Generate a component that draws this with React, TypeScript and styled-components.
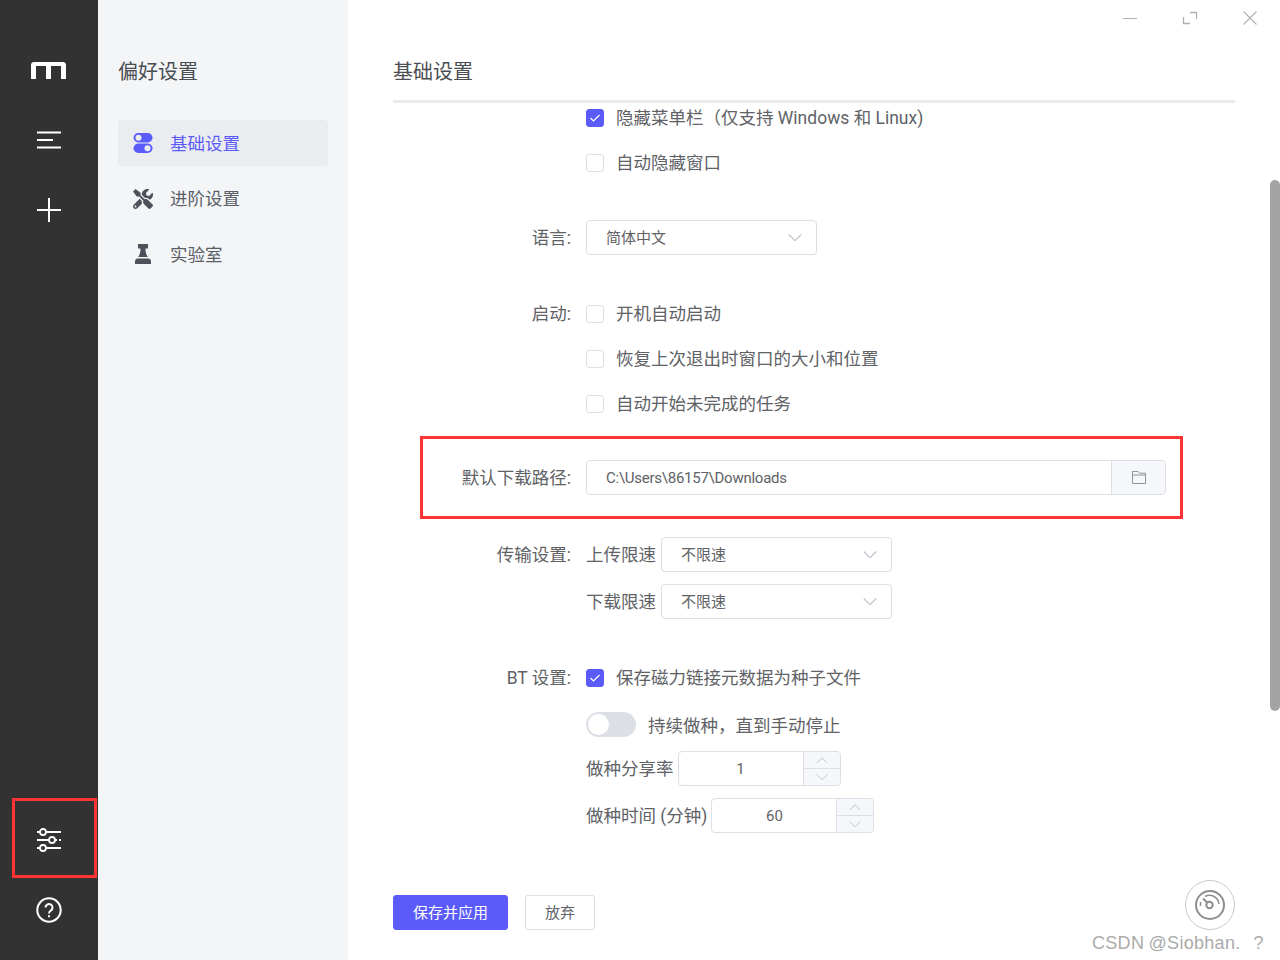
import React from "react";
import styled, { createGlobalStyle } from "styled-components";
import { FaTools } from "react-icons/fa";

const Global = createGlobalStyle`
  html, body { margin: 0; padding: 0; background: #fff; }
  body { font-family: Roboto, "Noto Sans CJK SC", sans-serif; color: #606266; }
  * { box-sizing: border-box; }
`;

const Shell = styled.div`
  position: relative;
  display: flex;
  width: 1280px;
  height: 960px;
  overflow: hidden;
`;

const Rail = styled.aside`
  width: 98px;
  flex: none;
  background: #323232;
  display: flex;
  flex-direction: column;
  justify-content: space-between;
  padding: 35px 0 15px;
`;
const RailGroup = styled.div`
  display: flex;
  flex-direction: column;
`;
const RailItem = styled.div`
  height: 70px;
  display: flex;
  align-items: center;
  justify-content: center;
  color: #fff;
`;
const LogoMark = styled.svg`
  margin-right: 1px;
`;

const SubPanel = styled.nav`
  width: 250px;
  flex: none;
  background: #f4f5f7;
  padding: 50px 20px 0;
`;
const SubTitle = styled.h2`
  margin: 0 0 28px;
  height: 42px;
  line-height: 44px;
  font-size: 20px;
  font-weight: 400;
  color: #4a4d52;
`;
const NavList = styled.div`
  display: flex;
  flex-direction: column;
  gap: 9.5px;
`;
const NavItem = styled.div<{ $active?: boolean }>`
  height: 46px;
  display: flex;
  align-items: center;
  gap: 17px;
  padding-left: 15px;
  border-radius: 4px;
  font-size: 17.5px;
  background: ${(p) => (p.$active ? "#ebecf0" : "transparent")};
  color: ${(p) => (p.$active ? "#5b5bfa" : "#5a5e66")};
`;
const NavIcon = styled.span`
  width: 20px;
  height: 20px;
  display: flex;
  align-items: center;
  justify-content: center;
  color: #4d5159;
`;
const Caption = styled.span`
  padding-bottom: 2px;
`;

const Main = styled.main`
  flex: 1;
  min-width: 0;
  display: flex;
  flex-direction: column;
  padding: 0 45px;
`;
const MainHeader = styled.header`
  height: 103px;
  flex: none;
  padding-top: 50px;
  border-bottom: 3px solid #ebebeb;
`;
const MainTitle = styled.h1`
  margin: 0;
  height: 42px;
  line-height: 44px;
  font-size: 20px;
  font-weight: 400;
  color: #4a4d52;
`;
const ScrollArea = styled.div`
  height: 777px;
  flex: none;
  overflow: hidden;
`;
const ScrollContent = styled.div`
  margin-top: -8px;
`;
const Row = styled.div<{ $top?: number }>`
  display: flex;
  margin-top: ${(p) => p.$top ?? 0}px;
`;
const Label = styled.div<{ $h?: number }>`
  width: 178px;
  flex: none;
  margin-right: 15px;
  padding-top: 1px;
  text-align: right;
  font-size: 17.5px;
  height: ${(p) => p.$h ?? 45}px;
  line-height: ${(p) => p.$h ?? 45}px;
`;
const Field = styled.div`
  flex: 1;
  min-width: 0;
`;
const CheckLine = styled.div`
  height: 45px;
  display: flex;
  align-items: center;
  gap: 12px;
  font-size: 17.5px;
`;
const Box = styled.span<{ $on?: boolean }>`
  width: 18px;
  height: 18px;
  flex: none;
  border-radius: 3px;
  display: flex;
  align-items: center;
  justify-content: center;
  border: 1px solid ${(p) => (p.$on ? "#5b5bfa" : "#dcdfe6")};
  background: ${(p) => (p.$on ? "#5b5bfa" : "#fff")};
`;
const SelectBox = styled.div`
  width: 231px;
  height: 35px;
  flex: none;
  padding: 0 14px 0 19px;
  border: 1px solid #dcdfe6;
  border-radius: 4px;
  display: flex;
  align-items: center;
  justify-content: space-between;
  font-size: 15px;
`;
const PathGroup = styled.div`
  width: 580px;
  height: 35px;
  display: flex;
  border: 1px solid #dcdfe6;
  border-radius: 4px;
`;
const PathValue = styled.div`
  flex: 1;
  padding-left: 19px;
  line-height: 35px;
  font-size: 15px;
  letter-spacing: -0.25px;
`;
const PathAppend = styled.div`
  width: 54px;
  flex: none;
  background: #f5f7fa;
  border-left: 1px solid #dcdfe6;
  border-radius: 0 4px 4px 0;
  display: flex;
  align-items: center;
  justify-content: center;
`;
const InlineField = styled.div<{ $gap?: number; $top?: number }>`
  display: flex;
  align-items: center;
  height: 35px;
  gap: ${(p) => p.$gap ?? 4}px;
  margin-top: ${(p) => p.$top ?? 0}px;
  font-size: 17.5px;
  white-space: nowrap;
`;
const SwitchLine = styled.div`
  display: flex;
  align-items: center;
  gap: 12px;
  height: 25px;
  margin-top: 12px;
  font-size: 17.5px;
`;
const SwitchTrack = styled.span`
  width: 50px;
  height: 25px;
  flex: none;
  border-radius: 13px;
  background: #dcdfe6;
  padding: 2px;
`;
const SwitchKnob = styled.span`
  display: block;
  width: 21px;
  height: 21px;
  border-radius: 50%;
  background: #fff;
`;
const NumberBox = styled.div`
  width: 163px;
  height: 35px;
  flex: none;
  display: flex;
  border: 1px solid #dcdfe6;
  border-radius: 4px;
`;
const NumberValue = styled.div`
  flex: 1;
  text-align: center;
  line-height: 35px;
  font-size: 15px;
`;
const Stepper = styled.div`
  width: 37px;
  flex: none;
  display: flex;
  flex-direction: column;
  background: #f5f7fa;
  border-left: 1px solid #dcdfe6;
  border-radius: 0 4px 4px 0;
`;
const Step = styled.div<{ $last?: boolean }>`
  flex: 1;
  display: flex;
  align-items: center;
  justify-content: center;
  border-bottom: ${(p) => (p.$last ? "none" : "1px solid #dcdfe6")};
`;
const Footer = styled.footer`
  flex: 1;
  display: flex;
  align-items: flex-start;
  gap: 17px;
  padding-top: 15px;
`;
const Button = styled.div<{ $primary?: boolean }>`
  height: 35px;
  width: ${(p) => (p.$primary ? 115 : 70)}px;
  padding-bottom: 2px;
  display: flex;
  align-items: center;
  justify-content: center;
  border-radius: 3px;
  font-size: 15px;
  color: ${(p) => (p.$primary ? "#fff" : "#606266")};
  background: ${(p) => (p.$primary ? "#5b5bfa" : "#fff")};
  border: 1px solid ${(p) => (p.$primary ? "#5b5bfa" : "#dcdfe6")};
`;

const WindowControls = styled.div`
  position: absolute;
  top: 8px;
  right: 20px;
  display: flex;
  gap: 40px;
  color: #b0b0b0;
`;
const Scrollbar = styled.div`
  position: absolute;
  right: 0;
  top: 180px;
  width: 10px;
  height: 531px;
  border-radius: 5px;
  background: #a3a3a3;
`;
const SpeedDial = styled.div`
  position: absolute;
  left: 1185px;
  top: 880px;
  width: 50px;
  height: 50px;
  border-radius: 50%;
  border: 1px solid #c8c8c8;
  background: #fff;
  display: flex;
  align-items: center;
  justify-content: center;
  color: #8e8e8e;
`;
const Watermark = styled.div`
  position: absolute;
  left: 1092px;
  top: 931px;
  font-family: "Liberation Sans", sans-serif;
  font-size: 18px;
  line-height: 25px;
  letter-spacing: 0.3px;
  word-spacing: -1px;
  white-space: pre;
  color: #ababab;
`;
const Callout = styled.div<{ $x: number; $y: number; $w: number; $h: number }>`
  position: absolute;
  left: ${(p) => p.$x}px;
  top: ${(p) => p.$y}px;
  width: ${(p) => p.$w}px;
  height: ${(p) => p.$h}px;
  border: 3px solid #ff3333;
  pointer-events: none;
`;

const Logo = () => (
  <LogoMark width="35" height="17" viewBox="0 0 35 17" fill="#fff">
    <path d="M0 17V3C0 1.300 1.300 0 3 0H32C33.700 0 35 1.300 35 3V17H30V4H20V17H15V4H5V17Z" />
  </LogoMark>
);
const MenuIcon = () => (
  <svg width="24" height="18" viewBox="0 0 24 18" fill="none" stroke="#fff" strokeWidth="2">
    <path d="M0 1.500h24M0 9h16M0 16.500h24" />
  </svg>
);
const PlusIcon = () => (
  <svg width="24" height="24" viewBox="0 0 24 24" fill="none" stroke="#fff" strokeWidth="2">
    <path d="M0 12h24M12 0v24" />
  </svg>
);
const SlidersIcon = () => (
  <svg width="24" height="24" viewBox="0 0 24 24" fill="none" stroke="#fff" strokeWidth="1.800">
    <path d="M0 4h3M9.500 4H24M0 12h12M18.500 12h1.500M22 12h2M0 20h3M9.500 20H24" />
    <circle cx="6" cy="4" r="3" />
    <circle cx="15" cy="12" r="3" />
    <circle cx="6" cy="20" r="3" />
  </svg>
);
const HelpIcon = () => (
  <svg width="26" height="26" viewBox="0 0 26 26" fill="none" stroke="#fff" strokeWidth="2">
    <circle cx="13" cy="13" r="11.700" />
    <path d="M9.500 10.500a3.500 3.500 0 1 1 5.500 2.900c-1.300.9-2 1.300-2 3" />
    <path d="M13 18.300v2" />
  </svg>
);
const ToggleIcon = () => (
  <svg width="20" height="20" viewBox="0 0 20 20">
    <rect x="0.500" y="0" width="19" height="9.500" rx="4.750" fill="#5b5bfa" />
    <rect x="0.500" y="10.500" width="19" height="9.500" rx="4.750" fill="#5b5bfa" />
    <circle cx="5.500" cy="4.750" r="3" fill="#ebecf0" />
    <circle cx="14.500" cy="15.250" r="3" fill="#ebecf0" />
  </svg>
);
const LabIcon = () => (
  <svg width="16" height="20" viewBox="0 0 16 20" fill="#4d5159">
    <path d="M3 0h10v4.500h-2.500c0 3 .3 5.500 2.300 8.500H3.200c2-3 2.300-5.500 2.300-8.500H3z" />
    <path d="M2.700 14.500h10.600c1.500 0 2.700 1.200 2.700 2.700V20H0v-2.800c0-1.500 1.200-2.700 2.700-2.700z" />
  </svg>
);
const Check = () => (
  <svg width="12" height="10" viewBox="0 0 12 10" fill="none" stroke="#fff" strokeWidth="1.200">
    <path d="M1.500 5l3 3 6-6" />
  </svg>
);
const Chevron = ({ up, size = 14 }: { up?: boolean; size?: number }) => (
  <svg width={size} height={size * 0.55} viewBox="0 0 14 8" fill="none" stroke="#c0c4cc" strokeWidth="1.200">
    <path d={up ? "M0.500 7.500L7 1l6.500 6.500" : "M0.500 0.500L7 7l6.500-6.500"} />
  </svg>
);
const FolderIcon = () => (
  <svg width="14" height="13" viewBox="0 0 14 13" fill="none" stroke="#909399" strokeWidth="1">
    <path d="M0.500 12.500V0.500H6L7.500 2.200H13.500V12.500Z" />
    <path d="M0.500 4H13.500" />
  </svg>
);
const DialIcon = () => (
  <svg width="32" height="32" viewBox="0 0 32 32" fill="none" stroke="currentColor" strokeWidth="2">
    <circle cx="16" cy="16" r="14" />
    <circle cx="15.500" cy="16" r="3.200" />
    <path d="M13.300 13.800L9 9.500" />
    <path d="M11 7.500A9.500 9.500 0 0 1 25 15M6.500 17A9.500 9.500 0 0 1 6.800 13" strokeWidth="1.500" />
  </svg>
);
const WinMin = () => (
  <svg width="20" height="20" viewBox="0 0 20 20" fill="none" stroke="currentColor" strokeWidth="1">
    <path d="M3 10.500h14" />
  </svg>
);
const WinMax = () => (
  <svg width="20" height="20" viewBox="0 0 20 20" fill="none" stroke="currentColor" strokeWidth="1.300">
    <path d="M10 4.500h6.500V11M3.500 9v6.500H10" />
  </svg>
);
const WinClose = () => (
  <svg width="20" height="20" viewBox="0 0 20 20" fill="none" stroke="currentColor" strokeWidth="1.100">
    <path d="M3.500 3.500l13 13M16.500 3.500l-13 13" />
  </svg>
);

const Check1 = ({ on, children }: { on?: boolean; children: React.ReactNode }) => (
  <CheckLine>
    <Box $on={on}>{on && <Check />}</Box>
    <Caption>{children}</Caption>
  </CheckLine>
);
const Select = ({ value }: { value: string }) => (
  <SelectBox>
    <Caption>{value}</Caption>
    <Chevron />
  </SelectBox>
);
const NumberInput = ({ value }: { value: string }) => (
  <NumberBox>
    <NumberValue>{value}</NumberValue>
    <Stepper>
      <Step>
        <Chevron up size={12} />
      </Step>
      <Step $last>
        <Chevron size={12} />
      </Step>
    </Stepper>
  </NumberBox>
);

export default function App() {
  return (
    <Shell>
      <Global />
      <Rail>
        <RailGroup>
          <RailItem><Logo /></RailItem>
          <RailItem><MenuIcon /></RailItem>
          <RailItem><PlusIcon /></RailItem>
        </RailGroup>
        <RailGroup>
          <RailItem><SlidersIcon /></RailItem>
          <RailItem><HelpIcon /></RailItem>
        </RailGroup>
      </Rail>
      <SubPanel>
        <SubTitle>偏好设置</SubTitle>
        <NavList>
          <NavItem $active><NavIcon><ToggleIcon /></NavIcon><Caption>基础设置</Caption></NavItem>
          <NavItem><NavIcon><FaTools size={20} /></NavIcon><Caption>进阶设置</Caption></NavItem>
          <NavItem><NavIcon><LabIcon /></NavIcon><Caption>实验室</Caption></NavItem>
        </NavList>
      </SubPanel>
      <Main>
        <MainHeader>
          <MainTitle>基础设置</MainTitle>
        </MainHeader>
        <ScrollArea>
          <ScrollContent>
            <Row>
              <Label />
              <Field>
                <Check1 on>隐藏菜单栏（仅支持 Windows 和 Linux)</Check1>
                <Check1>自动隐藏窗口</Check1>
              </Field>
            </Row>
            <Row $top={35}>
              <Label $h={35}>语言:</Label>
              <Field><Select value="简体中文" /></Field>
            </Row>
            <Row $top={36}>
              <Label>启动:</Label>
              <Field>
                <Check1>开机自动启动</Check1>
                <Check1>恢复上次退出时窗口的大小和位置</Check1>
                <Check1>自动开始未完成的任务</Check1>
              </Field>
            </Row>
            <Row $top={34}>
              <Label $h={35}>默认下载路径:</Label>
              <Field>
                <PathGroup>
                  <PathValue>C:\Users\86157\Downloads</PathValue>
                  <PathAppend><FolderIcon /></PathAppend>
                </PathGroup>
              </Field>
            </Row>
            <Row $top={42}>
              <Label $h={35}>传输设置:</Label>
              <Field>
                <InlineField $gap={5}><Caption>上传限速</Caption><Select value="不限速" /></InlineField>
                <InlineField $gap={5} $top={12}><Caption>下载限速</Caption><Select value="不限速" /></InlineField>
              </Field>
            </Row>
            <Row $top={36}>
              <Label>BT 设置:</Label>
              <Field>
                <Check1 on>保存磁力链接元数据为种子文件</Check1>
                <SwitchLine>
                  <SwitchTrack><SwitchKnob /></SwitchTrack>
                  持续做种，直到手动停止
                </SwitchLine>
                <InlineField $top={14}><Caption>做种分享率</Caption><NumberInput value="1" /></InlineField>
                <InlineField $top={12} $gap={4}><Caption>做种时间 (分钟)</Caption><NumberInput value="60" /></InlineField>
              </Field>
            </Row>
          </ScrollContent>
        </ScrollArea>
        <Footer>
          <Button $primary>保存并应用</Button>
          <Button>放弃</Button>
        </Footer>
      </Main>
      <WindowControls>
        <WinMin />
        <WinMax />
        <WinClose />
      </WindowControls>
      <Scrollbar />
      <SpeedDial><DialIcon /></SpeedDial>
      <Watermark>CSDN @Siobhan.   ?</Watermark>
      <Callout $x={420} $y={436} $w={763} $h={83} />
      <Callout $x={12} $y={798} $w={85} $h={80} />
    </Shell>
  );
}
